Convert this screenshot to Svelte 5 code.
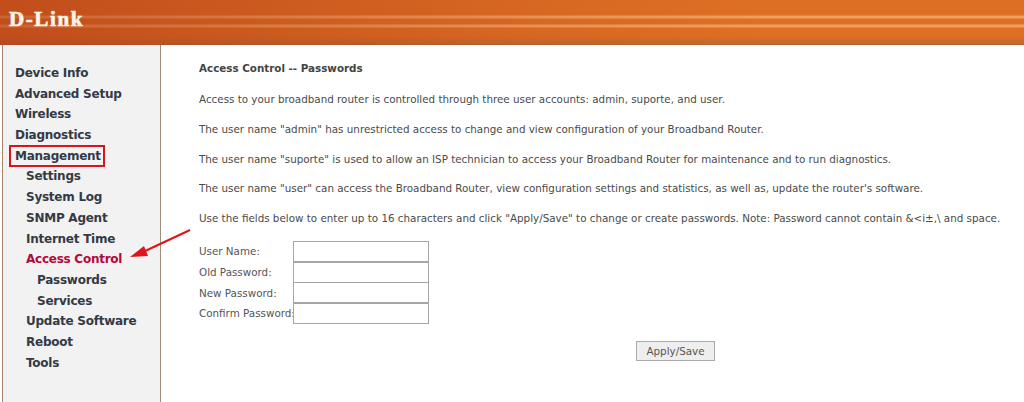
<script>
  const menu = [
    { label: 'Device Info', level: 0 },
    { label: 'Advanced Setup', level: 0 },
    { label: 'Wireless', level: 0 },
    { label: 'Diagnostics', level: 0 },
    { label: 'Management', level: 0, boxed: true },
    { label: 'Settings', level: 1 },
    { label: 'System Log', level: 1 },
    { label: 'SNMP Agent', level: 1 },
    { label: 'Internet Time', level: 1 },
    { label: 'Access Control', level: 1, active: true },
    { label: 'Passwords', level: 2 },
    { label: 'Services', level: 2 },
    { label: 'Update Software', level: 1 },
    { label: 'Reboot', level: 1 },
    { label: 'Tools', level: 1 }
  ];

  const paragraphs = [
    'Access to your broadband router is controlled through three user accounts: admin, suporte, and user.',
    'The user name "admin" has unrestricted access to change and view configuration of your Broadband Router.',
    'The user name "suporte" is used to allow an ISP technician to access your Broadband Router for maintenance and to run diagnostics.',
    'The user name "user" can access the Broadband Router, view configuration settings and statistics, as well as, update the router\'s software.',
    'Use the fields below to enter up to 16 characters and click "Apply/Save" to change or create passwords. Note: Password cannot contain &<i±,\\ and space.'
  ];

  const fields = ['User Name:', 'Old Password:', 'New Password:', 'Confirm Password:'];
</script>

<div class="page">
  <header class="banner">
    <span class="logo">D-Link</span>
  </header>

  <div class="main">
    <nav class="sidebar">
      {#each menu as item}
        <div class="item level{item.level}" class:active={item.active}>
          <span class:boxed={item.boxed}>{item.label}</span>
        </div>
      {/each}
    </nav>

    <section class="content">
      <h1>Access Control -- Passwords</h1>
      {#each paragraphs as text}
        <p>{text}</p>
      {/each}

      <div class="form">
        {#each fields as name}
          <label>
            <span>{name}</span>
            <input type="text" />
          </label>
        {/each}
      </div>

      <div class="actions">
        <button type="button">Apply/Save</button>
      </div>
    </section>
  </div>

  <!-- seta vermelha apontando para Access Control -->
  <svg class="arrow" width="70" height="40" viewBox="0 0 70 40">
    <path d="M62 3 L15 25" stroke="#e0141c" stroke-width="2" fill="none" />
    <path d="M2 30 L16 19 L20 29 Z" fill="#e0141c" />
  </svg>
</div>

<style>
  :global(body) {
    margin: 0;
    background: #fff;
  }

  .page {
    position: relative;
    width: 1024px;
    height: 402px;
    overflow: hidden;
    font-family: 'DejaVu Sans', sans-serif;
  }

  .banner {
    height: 45px;
    box-sizing: border-box;
    padding: 8px 0 0 9px;
    background:
      linear-gradient(to bottom,
        transparent 15px, rgba(255, 190, 130, 0.6) 16px, rgba(255, 190, 130, 0.6) 18px, transparent 19px,
        transparent 24px, rgba(255, 190, 130, 0.6) 25px, rgba(255, 190, 130, 0.6) 27px, transparent 28px),
      linear-gradient(to bottom, #dd6f25 0, #de6f24 35px, #c5682c 44px, #a9643a 45px);
    position: relative;
  }

  .banner::before {
    content: '';
    position: absolute;
    inset: 0;
    background: linear-gradient(to right, rgba(170, 50, 20, 0.55), rgba(170, 50, 20, 0.1) 55%, transparent 75%);
  }

  .logo {
    position: relative;
    font-family: 'Liberation Serif', serif;
    font-weight: bold;
    font-size: 21px;
    line-height: 23px;
    letter-spacing: 1.6px;
    color: #fbf3e6;
    -webkit-text-stroke: 0.7px #fbf3e6;
  }

  .main {
    display: flex;
    height: 357px;
  }

  .sidebar {
    width: 157px;
    margin-left: 2px;
    padding-top: 18px;
    background: #f2f2f2;
    border-left: 1px solid #a9826a;
    border-right: 1px solid #a08a78;
  }

  .item {
    height: 20.7px;
    line-height: 20.7px;
    font-size: 12px;
    letter-spacing: -0.25px;
    font-weight: bold;
    color: #333a45;
    white-space: nowrap;
  }

  .level0 { padding-left: 12px; }
  .level1 { padding-left: 23px; }
  .level2 { padding-left: 34px; }

  .active {
    color: #b5083a;
  }

  .boxed {
    outline: 2px solid #d8141c;
    padding: 2px 2px 2px 4px;
    margin-left: -4px;
  }

  .content {
    flex: 1;
    padding: 16px 0 0 38px;
    font-size: 10.35px;
    color: #4a4a4a;
    min-width: 0;
  }

  h1 {
    margin: 0 0 17px;
    font-size: 10.35px;
    line-height: 14px;
    font-weight: bold;
    color: #444;
  }

  p {
    margin: 0 0 15.75px;
    line-height: 14px;
    white-space: nowrap;
  }

  .form {
    margin-top: 16px;
  }

  label {
    display: flex;
    align-items: center;
    height: 20.7px;
    color: #555;
  }

  label span {
    width: 94px;
    flex: none;
    white-space: nowrap;
  }

  input {
    width: 136px;
    height: 21px;
    box-sizing: border-box;
    margin: 0;
    padding: 0;
    background: #fff;
    border: 1px solid #a6a6a6;
    border-radius: 0;
  }

  .actions {
    margin: 17px 0 0 437px;
  }

  button {
    width: 79px;
    height: 20px;
    padding: 0;
    font-family: inherit;
    font-size: 10.35px;
    color: #555;
    background: #eeeeee;
    border: 1px solid #aaa;
    border-radius: 0;
  }

  .arrow {
    position: absolute;
    left: 128px;
    top: 227px;
  }
</style>
